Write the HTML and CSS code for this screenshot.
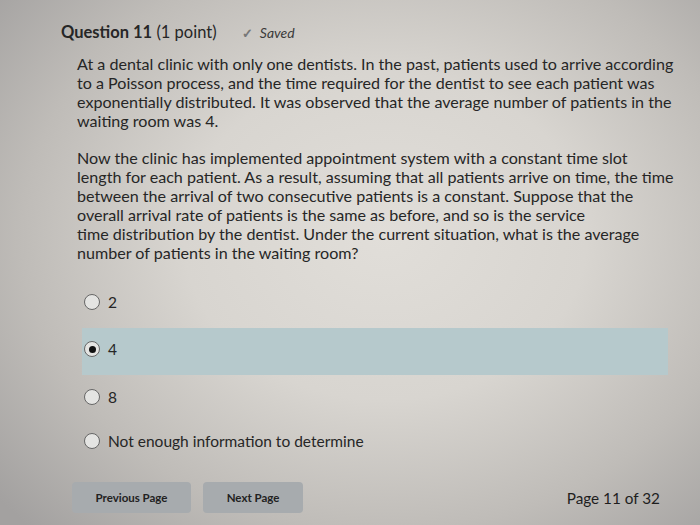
FILE: index.html
```html
<!DOCTYPE html>
<html lang="en">
<head>
<meta charset="utf-8">
<title>Question 11</title>
<link rel="stylesheet" href="styles.css">
</head>
<body>
<div class="page">
  <div class="q-header">
    <span class="q-title"><b>Question 11</b> (1 point)</span>
    <span class="saved"><span class="check">✓</span> Saved</span>
  </div>
  <div class="q-body">
    <p class="para">At a dental clinic with only one dentists. In the past, patients used to arrive according<br>to a Poisson process, and the time required for the dentist to see each patient was<br>exponentially distributed. It was observed that the average number of patients in the<br>waiting room was 4.</p>
    <p class="para">Now the clinic has implemented appointment system with a constant time slot<br>length for each patient. As a result, assuming that all patients arrive on time, the time<br>between the arrival of two consecutive patients is a constant. Suppose that the<br>overall arrival rate of patients is the same as before, and so is the service<br>time distribution by the dentist. Under the current situation, what is the average<br>number of patients in the waiting room?</p>
  </div>
  <div class="options">
    <div class="opt"><span class="radio"></span><span class="opt-label">2</span></div>
    <div class="opt selected"><span class="radio checked"></span><span class="opt-label">4</span></div>
    <div class="opt"><span class="radio"></span><span class="opt-label">8</span></div>
    <div class="opt"><span class="radio"></span><span class="opt-label">Not enough information to determine</span></div>
  </div>
  <div class="footer">
    <button class="btn btn-prev">Previous Page</button>
    <button class="btn btn-next">Next Page</button>
    <span class="page-count">Page 11 of 32</span>
  </div>
</div>
</body>
</html>
```
FILE: styles.css
```css
html, body {
  margin: 0;
  height: 100%;
}
body {
  width: 700px;
  height: 525px;
  overflow: hidden;
  font-family: Lato, "Open Sans", sans-serif;
  color: #262626;
  background: radial-gradient(ellipse 72% 78% at 55% 45%, #e1ded9 0%, #d8d5d0 40%, #bfbcb8 72%, #a3a1a0 100%);
}
.page {
  padding: 22px 0 0 61px;
  width: 630px;
}
.q-header {
  display: flex;
  align-items: center;
  height: 20px;
  font-size: 16.5px;
}
.q-title b {
  font-weight: 700;
}
.saved {
  margin-left: 25px;
  font-size: 14px;
  font-style: italic;
  color: #3a3a3a;
}
.check {
  font-style: normal;
  font-weight: 700;
  color: #777;
  font-size: 13px;
  margin-right: 4px;
}
.q-body {
  margin: 12px 0 0 16px;
}
.para {
  margin: 0 0 18px;
  font-size: 16.1px;
  line-height: 19px;
  white-space: nowrap;
}
.options {
  margin: 9px 0 0 21px;
  width: 586px;
}
.opt {
  display: flex;
  align-items: center;
  height: 44px;
  padding-left: 2px;
  font-size: 15.5px;
}
.opt.selected {
  height: 47px;
  margin-top: 4px;
  padding-bottom: 5px;
  box-sizing: border-box;
  background: #b6c9cc;
}
.radio {
  width: 14px;
  height: 14px;
  border: 1.5px solid #666;
  border-radius: 50%;
  background: #e4e4e2;
  margin-right: 8px;
  display: flex;
  align-items: center;
  justify-content: center;
  flex: none;
}
.radio.checked::after {
  content: "";
  width: 7px;
  height: 7px;
  border-radius: 50%;
  background: #111;
}
.footer {
  display: flex;
  align-items: center;
  margin: 19px 0 0 11px;
  width: 588px;
}
.btn {
  font-family: Lato, "Open Sans", sans-serif;
  font-weight: 700;
  font-size: 11.5px;
  color: #222;
  background: #a7abae;
  border: none;
  border-radius: 4px;
  height: 31px;
  padding: 0;
}
.btn-prev {
  width: 119px;
}
.btn-next {
  width: 100px;
  margin-left: 12px;
}
.page-count {
  margin-left: auto;
  font-size: 15.3px;
  color: #1e1e1e;
}
```
